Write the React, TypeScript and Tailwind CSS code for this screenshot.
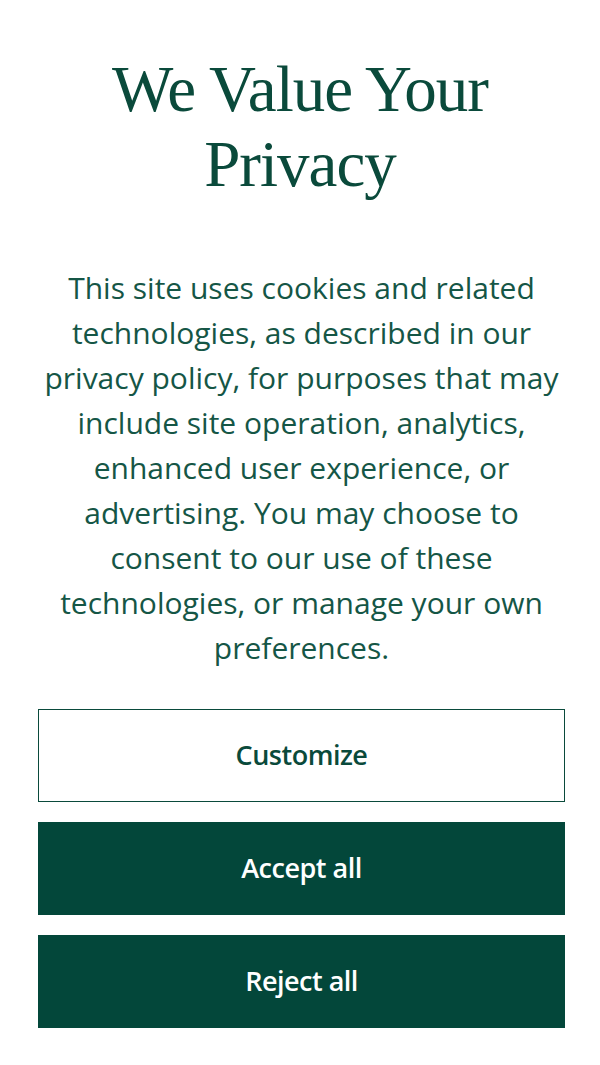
import React from 'react';

const lines = [
  'This site uses cookies and related',
  'technologies, as described in our',
  'privacy policy, for purposes that may',
  'include site operation, analytics,',
  'enhanced user experience, or',
  'advertising. You may choose to',
  'consent to our use of these',
  'technologies, or manage your own',
  'preferences.',
];

const App: React.FC = () => {
  return (
    <div className="min-h-screen bg-white pl-[38px] pr-[35px] pt-[52px] text-[#0b4a3c]">
      <h1 className="-ml-[3px] text-center font-['Liberation_Serif',serif] text-[65px] leading-[75px] tracking-[-1px] text-[#0a4a3b]">
        We Value Your
        <br />
        Privacy
      </h1>

      <p className="-mx-4 mt-[63px] text-center font-['Open_Sans',sans-serif] text-[30px] leading-[45px] text-[#155646]">
        {lines.map((l, i) => (
          <React.Fragment key={i}>
            {l}
            {i < lines.length - 1 && <br />}
          </React.Fragment>
        ))}
      </p>

      <div className="mt-[39px] flex flex-col gap-5">
        <button className="h-[93px] border border-[#0a4a3b] bg-white font-['Open_Sans',sans-serif] text-[27px] font-semibold tracking-[-0.5px] text-[#0a4a3b]">
          Customize
        </button>
        <button className="h-[93px] bg-[#03473a] font-['Open_Sans',sans-serif] text-[27px] font-semibold tracking-[-0.5px] text-white">
          Accept all
        </button>
        <button className="h-[93px] bg-[#03473a] font-['Open_Sans',sans-serif] text-[27px] font-semibold tracking-[-0.5px] text-white">
          Reject all
        </button>
      </div>
    </div>
  );
};

export default App;
